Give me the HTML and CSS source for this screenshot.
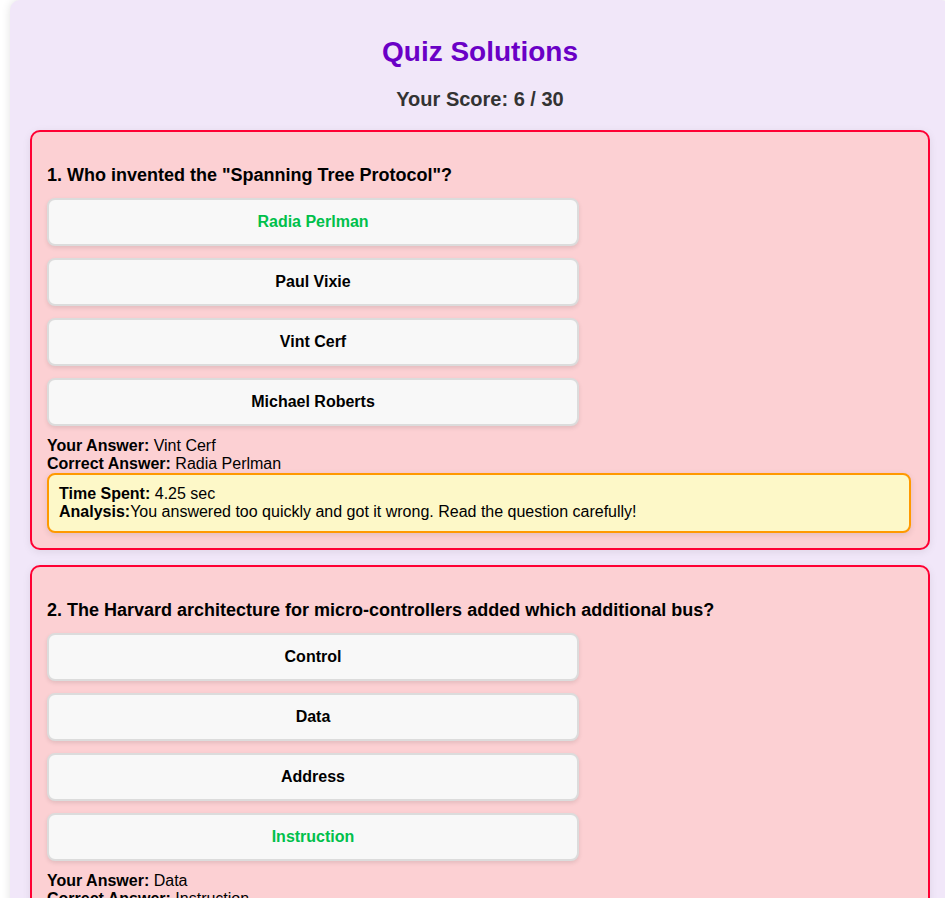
FILE: index.html
```html
<!DOCTYPE html>
<html lang="en">
<head>
<meta charset="utf-8">
<title>Quiz Solutions</title>
<link rel="stylesheet" href="styles.css">
</head>
<body>
<div class="container">
  <h1 class="title">Quiz Solutions</h1>
  <h2 class="score">Your Score: 6 / 30</h2>

  <div class="card wrong">
    <h3 class="question">1. Who invented the "Spanning Tree Protocol"?</h3>
    <div class="options">
      <div class="option correct">Radia Perlman</div>
      <div class="option">Paul Vixie</div>
      <div class="option">Vint Cerf</div>
      <div class="option">Michael Roberts</div>
    </div>
    <div class="answers">
      <div><b>Your Answer:</b> Vint Cerf</div>
      <div><b>Correct Answer:</b> Radia Perlman</div>
    </div>
    <div class="analysis">
      <div><b>Time Spent:</b> 4.25 sec</div>
      <div><b>Analysis:</b>You answered too quickly and got it wrong. Read the question carefully!</div>
    </div>
  </div>

  <div class="card wrong">
    <h3 class="question">2. The Harvard architecture for micro-controllers added which additional bus?</h3>
    <div class="options">
      <div class="option">Control</div>
      <div class="option">Data</div>
      <div class="option">Address</div>
      <div class="option correct">Instruction</div>
    </div>
    <div class="answers">
      <div><b>Your Answer:</b> Data</div>
      <div><b>Correct Answer:</b> Instruction</div>
    </div>
    <div class="analysis">
      <div><b>Time Spent:</b> 2.10 sec</div>
      <div><b>Analysis:</b>You answered too quickly and got it wrong. Read the question carefully!</div>
    </div>
  </div>
</div>
</body>
</html>
```

FILE: styles.css
```css
html {
  overflow-x: hidden;
}
body {
  margin: 0;
  background: #ffffff;
  font-family: "Liberation Sans", Arial, sans-serif;
  color: #000;
}
.container {
  margin-left: 10px;
  width: 940px;
  box-sizing: border-box;
  padding: 20px;
  background: #f1e7f9;
  border-radius: 10px;
  box-shadow: 0 0 10px rgba(0, 0, 0, 0.12);
}
.title {
  margin: 15px 0 0;
  text-align: center;
  font-size: 28px;
  line-height: 34px;
  color: #6a00c6;
}
.score {
  margin: 19px 0 19px;
  text-align: center;
  font-size: 20px;
  line-height: 23px;
  color: #333333;
}
.card {
  background: #fcd0d3;
  border: 2px solid #ff0033;
  border-radius: 10px;
  padding: 15px;
  margin-bottom: 15px;
  box-shadow: 0 2px 8px rgba(0, 0, 0, 0.08);
}
.question {
  margin: 18px 0 12px;
  font-size: 18px;
  line-height: 21px;
}
.options {
  display: flex;
  flex-direction: column;
  gap: 12px;
}
.option {
  width: 532px;
  box-sizing: border-box;
  padding: 12px;
  line-height: 20px;
  font-size: 16px;
  font-weight: bold;
  text-align: center;
  background: #f8f8f8;
  border: 2px solid #dcdcdc;
  border-radius: 8px;
  box-shadow: 0 2px 4px rgba(0, 0, 0, 0.1);
}
.option.correct {
  color: #00c04b;
}
.answers {
  margin-top: 11px;
  font-size: 16px;
  line-height: 18px;
}
.analysis {
  margin-top: 0;
  margin-right: 2px;
  padding: 10px;
  background: #fdf8c8;
  border: 2px solid #ff9900;
  border-radius: 8px;
  font-size: 16px;
  line-height: 18px;
  box-shadow: 0 2px 6px rgba(0, 0, 0, 0.1);
}
```
